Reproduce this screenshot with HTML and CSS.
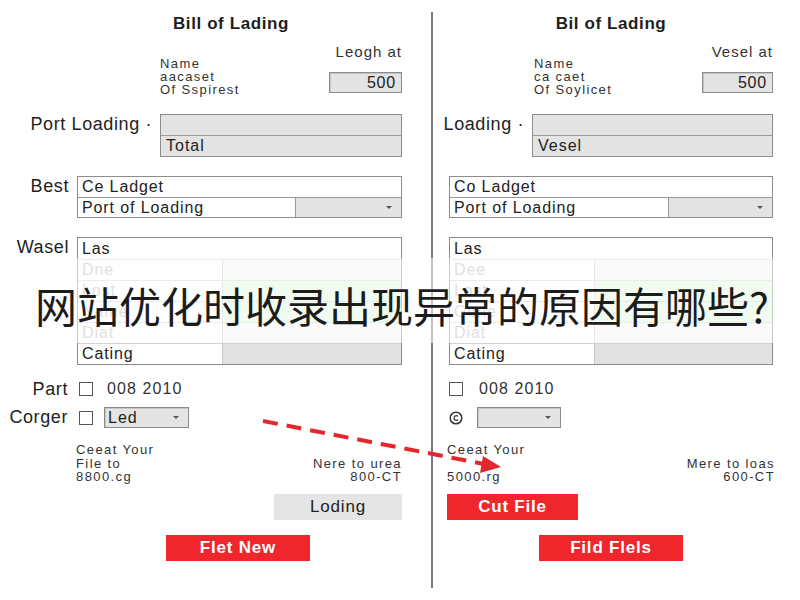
FILE: index.html
```html
<!DOCTYPE html>
<html lang="en">
<head>
<meta charset="utf-8">
<title>Bill of Lading</title>
<link rel="stylesheet" href="styles.css">
</head>
<body>
<div class="page">

  <section class="panel panel-left">
    <h1 class="title title-left">Bill of Lading</h1>

    <div class="head head-left">
      <div class="names">Name<br>aacaset<br>Of Sspirest</div>
      <div class="head-side">
        <span class="cap">Leogh at</span>
        <div class="num-box">500</div>
      </div>
    </div>

    <div class="field-row port">
      <span class="lbl">Port Loading ·</span>
      <div class="stack stack-left">
        <div class="stack-cell"></div>
        <div class="stack-cell">Total</div>
      </div>
    </div>

    <div class="field-row best">
      <span class="lbl">Best</span>
      <div class="combo combo-wide">
        <div class="combo-top">Ce Ladget</div>
        <div class="combo-bottom">
          <div class="combo-text">Port of Loading</div>
          <div class="combo-pick"><span class="caret"></span></div>
        </div>
      </div>
    </div>

    <div class="field-row wasel">
      <span class="lbl">Wasel</span>
      <div class="grid-table grid-wide">
        <div class="tc tc-full">Las</div>
        <div class="tc tc-l tc-faint">Dne</div><div class="tc tc-r"></div>
        <div class="tc tc-l tc-faint">Lost</div><div class="tc tc-r tc-green"></div>
        <div class="tc tc-l tc-faint">Name</div><div class="tc tc-r tc-green"></div>
        <div class="tc tc-l tc-faint">Diat</div><div class="tc tc-r"></div>
        <div class="tc tc-l">Cating</div><div class="tc tc-r tc-dark"></div>
      </div>
    </div>

    <div class="check-row">
      <span class="lbl lbl-short">Part</span>
      <span class="box-check"></span>
      <span class="check-text">008 2010</span>
    </div>

    <div class="select-row">
      <span class="lbl lbl-short">Corger</span>
      <span class="box-check"></span>
      <div class="select select-left">Led<span class="caret"></span></div>
    </div>

    <div class="notes notes-left">
      <div class="note-main">Ceeat Your<br>File to<br>8800.cg</div>
      <div class="note-side">Nere to urea<br>800-CT</div>
    </div>

    <div class="btn-row btn-row-left">
      <button class="btn btn-gray">Loding</button>
    </div>

    <div class="btn-row2 btn-row2-left">
      <button class="btn btn-red">Flet New</button>
    </div>
  </section>

  <div class="divider"></div>

  <section class="panel panel-right">
    <h1 class="title">Bil of Lading</h1>

    <div class="head head-right">
      <div class="names">Name<br>ca caet<br>Of Soylicet</div>
      <div class="head-side">
        <span class="cap">Vesel at</span>
        <div class="num-box">500</div>
      </div>
    </div>

    <div class="field-row port">
      <span class="lbl">Loading ·</span>
      <div class="stack stack-right">
        <div class="stack-cell"></div>
        <div class="stack-cell">Vesel</div>
      </div>
    </div>

    <div class="field-row best">
      <div class="combo combo-full">
        <div class="combo-top">Co Ladget</div>
        <div class="combo-bottom">
          <div class="combo-text">Port of Loading</div>
          <div class="combo-pick"><span class="caret"></span></div>
        </div>
      </div>
    </div>

    <div class="field-row wasel">
      <div class="grid-table grid-full">
        <div class="tc tc-full">Las</div>
        <div class="tc tc-l tc-faint">Dee</div><div class="tc tc-r"></div>
        <div class="tc tc-l tc-faint">Lost</div><div class="tc tc-r tc-green"></div>
        <div class="tc tc-l tc-faint">Gone</div><div class="tc tc-r tc-green"></div>
        <div class="tc tc-l tc-faint">Diat</div><div class="tc tc-r"></div>
        <div class="tc tc-l">Cating</div><div class="tc tc-r tc-dark"></div>
      </div>
    </div>

    <div class="check-row">
      <span class="box-check"></span>
      <span class="check-text check-text-right">008 2010</span>
    </div>

    <div class="select-row">
      <svg class="dial" width="14" height="14" viewBox="0 0 14 14">
        <circle cx="7" cy="7" r="5.8" fill="none" stroke="#333" stroke-width="1.5"/>
        <path d="M9 5.4A2.3 2.3 0 1 0 9 8.6" fill="none" stroke="#333" stroke-width="1.3"/>
      </svg>
      <div class="select select-right"><span class="caret"></span></div>
    </div>

    <div class="notes notes-right">
      <div class="note-main">Ceeat Your<br>&nbsp;<br>5000.rg</div>
      <div class="note-side">Mere to loas<br>600-CT</div>
    </div>

    <div class="btn-row btn-row-right">
      <button class="btn btn-red btn-cut">Cut File</button>
    </div>

    <div class="btn-row2 btn-row2-right">
      <button class="btn btn-red">Fild Flels</button>
    </div>
  </section>

  <!-- dashed pointer linking the two forms -->
  <svg class="pointer" width="800" height="600" viewBox="0 0 800 600">
    <line x1="263" y1="421" x2="484" y2="464" stroke="#e5272d" stroke-width="4" stroke-dasharray="15 9"/>
    <polygon points="501,467 483,456 480,473" fill="#e5272d"/>
  </svg>

  <div class="banner">网站优化时收录出现异常的原因有哪些?</div>
</div>
</body>
</html>
```

FILE: styles.css
```css
* {
  box-sizing: border-box;
  margin: 0;
  padding: 0;
}

body {
  width: 800px;
  height: 600px;
  overflow: hidden;
  background: #ffffff;
  color: #222222;
  font-family: "Liberation Sans", Arial, sans-serif;
}

.page {
  position: relative;
  display: flex;
  height: 600px;
}

/* ---- panels ---- */
.panel {
  display: flex;
  flex-direction: column;
  min-width: 0;
}

.panel-left {
  flex: 0 0 431px;
  width: 431px;
  padding-right: 29px;
}

.panel-right {
  flex: 1 1 0;
  padding-left: 16px;
  padding-right: 27px;
}

.divider {
  flex: 0 0 2px;
  width: 2px;
  margin: 12px 0;
  background: #7a7a7a;
}

.title {
  margin-top: 14px;
  height: 20px;
  font-size: 17px;
  line-height: 20px;
  letter-spacing: 0.6px;
  font-weight: bold;
  text-align: center;
  color: #1e1e1e;
}

.title-left {
  margin-left: 60px;
}

/* ---- header block ---- */
.head {
  margin-top: 10px;
  height: 52px;
  display: flex;
  justify-content: space-between;
}

.head-left {
  margin-left: 160px;
}

.head-right {
  margin-left: 85px;
}

.names {
  margin-top: 13px;
  font-size: 13px;
  line-height: 13px;
  letter-spacing: 1.4px;
  white-space: nowrap;
  color: #333;
}

.head-side {
  display: flex;
  flex-direction: column;
  align-items: flex-end;
}

.cap {
  font-size: 15px;
  line-height: 16px;
  letter-spacing: 1px;
  white-space: nowrap;
  color: #333;
}

.num-box {
  margin-top: 12px;
  width: 73px;
  height: 21px;
  background: #e4e4e4;
  border: 1px solid #8c8c8c;
  box-shadow: inset 1px 1px 0 #c4c4c4;
  text-align: right;
  padding-right: 5px;
  font-size: 16px;
  letter-spacing: 0.8px;
  line-height: 19px;
}

.head-right .num-box {
  width: 71px;
}

/* ---- labelled rows ---- */
.field-row {
  display: flex;
  justify-content: flex-end;
  align-items: flex-start;
  gap: 8px;
}

.lbl {
  font-size: 18px;
  line-height: 21px;
  letter-spacing: 0.6px;
  white-space: nowrap;
  color: #222;
}

.port {
  margin-top: 18px;
  height: 43px;
}

.stack {
  flex: 0 0 auto;
  border: 1px solid #8d8d8d;
  background: #e3e3e3;
}

.stack-left {
  width: 242px;
}

.stack-right {
  width: 241px;
}

.stack-cell {
  height: 20px;
  padding-left: 5px;
  font-size: 16px;
  letter-spacing: 1px;
  line-height: 20px;
}

.stack-cell + .stack-cell {
  height: 21px;
  border-top: 1px solid #9a9a9a;
}

.best {
  margin-top: 19px;
  height: 42px;
}

.combo {
  flex: 0 0 auto;
  border: 1px solid #8d8d8d;
  background: #fff;
}

.combo-wide {
  width: 325px;
}

.combo-full {
  width: 324px;
}

.combo-top {
  height: 20px;
  padding-left: 4px;
  font-size: 16px;
  letter-spacing: 0.9px;
  line-height: 20px;
}

.combo-bottom {
  display: flex;
  height: 20px;
  border-top: 1px solid #999;
}

.combo-text {
  flex: 0 0 218px;
  padding-left: 4px;
  font-size: 16px;
  letter-spacing: 0.9px;
  line-height: 19px;
  white-space: nowrap;
  border-right: 1px solid #999;
}

.combo-full .combo-text {
  flex-basis: 219px;
}

.combo-pick {
  position: relative;
  flex: 1;
  background: #e3e3e3;
}

.caret {
  position: absolute;
  right: 9px;
  top: 8px;
  width: 0;
  height: 0;
  border-left: 3px solid transparent;
  border-right: 3px solid transparent;
  border-top: 3px solid #555;
}

/* ---- six-row table ---- */
.wasel {
  margin-top: 19px;
  height: 128px;
}

.grid-table {
  flex: 0 0 auto;
  display: grid;
  grid-template-columns: 145px 1fr;
  grid-auto-rows: 21px;
  border: 1px solid #8a8a8a;
  background: #fff;
}

.grid-wide {
  width: 325px;
}

.grid-full {
  width: 324px;
}

.tc {
  padding-left: 4px;
  font-size: 16px;
  letter-spacing: 0.9px;
  line-height: 20px;
  border-top: 1px solid #d2d2d2;
}

.tc-full {
  grid-column: 1 / 3;
  border-top: none;
  line-height: 21px;
}

.tc-l {
  border-right: 1px solid #c9c9c9;
}

.tc-faint {
  color: #b8b8b8;
}

.tc-r {
  background: #f3f3f3;
}

.tc-green {
  background: #e0f6dc;
}

.tc-dark {
  background: #e1e1e1;
}

/* ---- checkbox and select rows ---- */
.check-row {
  margin-top: 17px;
  height: 14px;
  display: flex;
  align-items: center;
}

.lbl-short {
  width: 68px;
  text-align: right;
}

.box-check {
  flex: 0 0 14px;
  width: 14px;
  height: 14px;
  border: 1.5px solid #555;
  background: #fff;
}

.lbl-short + .box-check {
  margin-left: 11px;
}

.check-text {
  margin-left: 14px;
  font-size: 16px;
  letter-spacing: 1.1px;
  line-height: 14px;
  color: #333;
}

.check-text-right {
  margin-left: 16px;
}

.select-row {
  margin-top: 11px;
  height: 21px;
  display: flex;
  align-items: center;
}

.select {
  position: relative;
  flex: 0 0 auto;
  height: 21px;
  background: #e4e4e4;
  border: 1px solid #8a8a8a;
  box-shadow: inset 1px 1px 0 #c6c6c6;
  padding-left: 3px;
  font-size: 16px;
  letter-spacing: 1px;
  line-height: 19px;
}

.select-left {
  margin-left: 11px;
  width: 85px;
}

.select-right {
  margin-left: 14px;
  width: 84px;
}

.dial {
  flex: 0 0 14px;
}

/* ---- notes ---- */
.notes {
  margin-top: 15px;
  height: 41px;
  display: flex;
  justify-content: space-between;
  font-size: 13px;
  letter-spacing: 1.4px;
  line-height: 13.5px;
  color: #333;
}

.notes-left {
  margin-left: 76px;
}

.notes-right {
  margin-left: -2px;
  margin-right: -2px;
}

.note-main {
  white-space: nowrap;
}

.note-side {
  padding-top: 13.5px;
  text-align: right;
  white-space: nowrap;
}

/* ---- buttons ---- */
.btn-row {
  margin-top: 10px;
  height: 26px;
  display: flex;
}

.btn-row-left {
  justify-content: flex-end;
}

.btn-row-right {
  margin-left: -2px;
}

.btn-row2 {
  margin-top: 15px;
  height: 26px;
  display: flex;
}

.btn-row2-left {
  margin-left: 166px;
}

.btn-row2-right {
  margin-left: 90px;
}

.btn {
  flex: 0 0 auto;
  height: 26px;
  width: 144px;
  border: none;
  font-family: "Liberation Sans", Arial, sans-serif;
  font-size: 17px;
  letter-spacing: 0.8px;
}

.btn-gray {
  width: 128px;
  background: #e5e5e5;
  color: #222;
}

.btn-red {
  background: #ef272d;
  color: #fff;
  font-weight: bold;
}

.btn-cut {
  width: 131px;
}

/* ---- overlays ---- */
.pointer {
  position: absolute;
  left: 0;
  top: 0;
  pointer-events: none;
}

.banner {
  position: absolute;
  left: 0;
  top: 258px;
  width: 800px;
  height: 85px;
  padding-top: 26px;
  padding-left: 35px;
  background: rgba(255, 255, 255, 0.55);
  font-family: "Noto Sans CJK SC", "Noto Sans", sans-serif;
  font-size: 42px;
  line-height: 1;
  color: #1c1c1c;
  white-space: nowrap;
}
```
